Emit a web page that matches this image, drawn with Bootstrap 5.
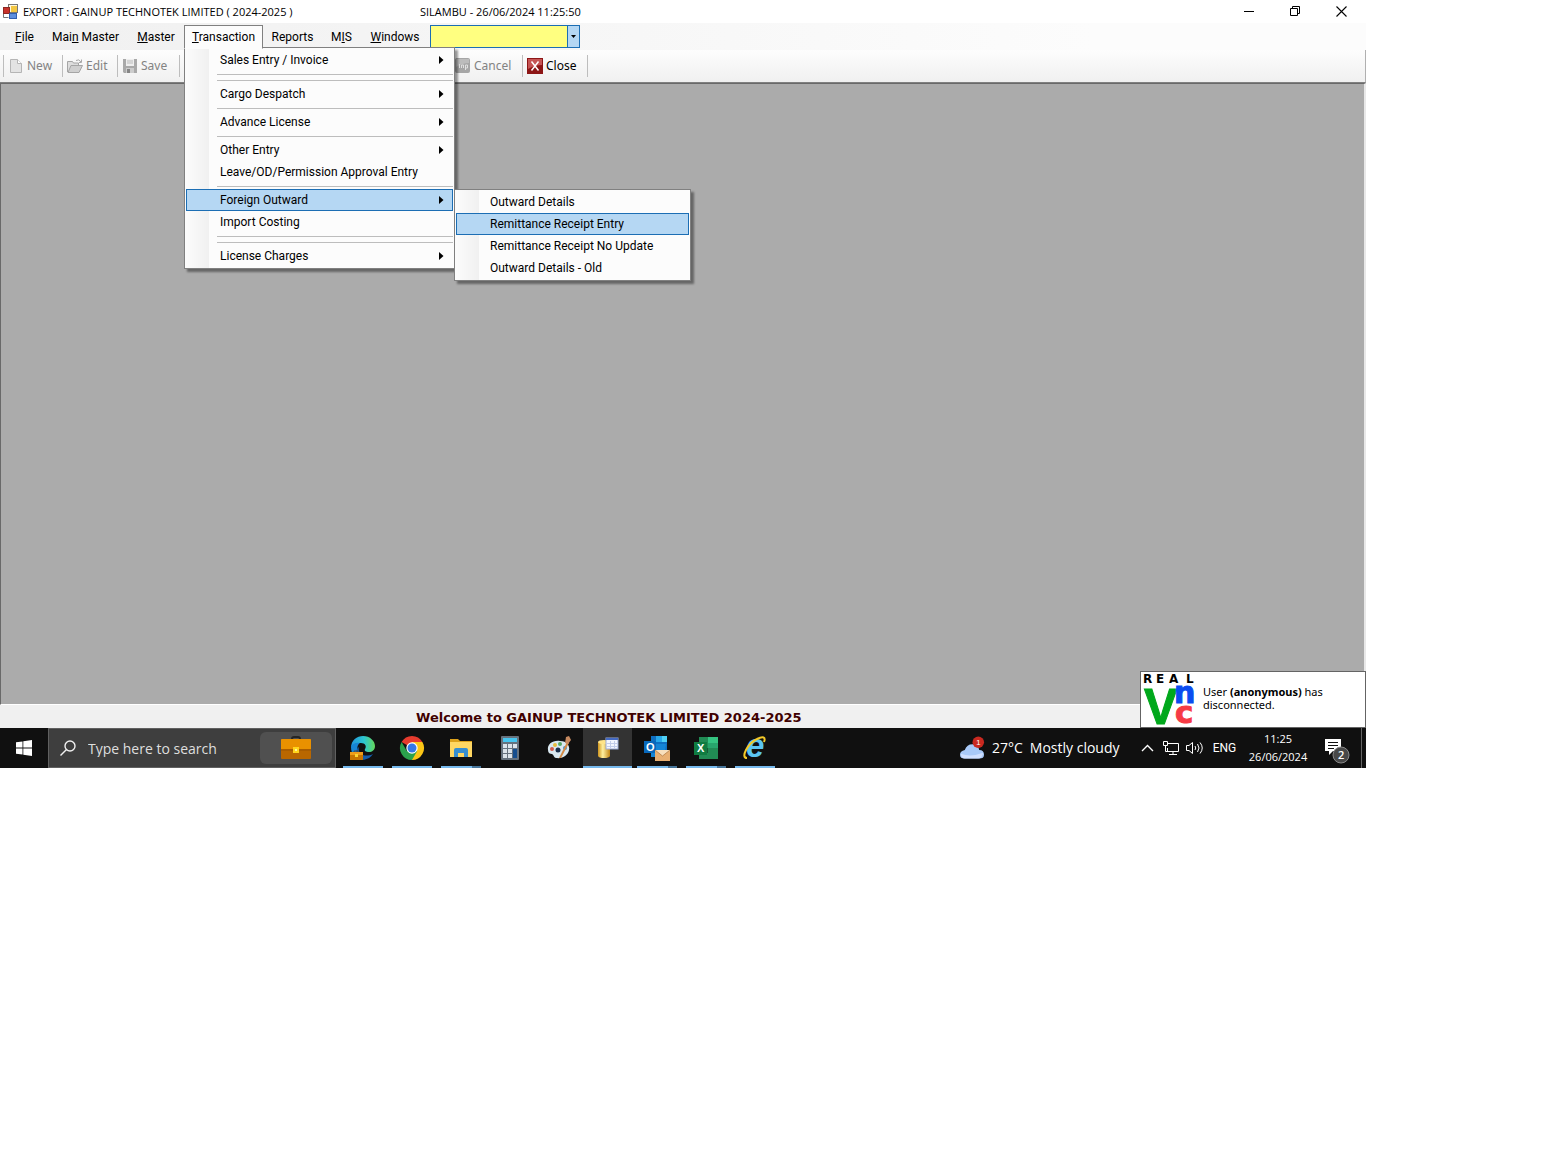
<!DOCTYPE html>
<html lang="en">
<head>
<meta charset="utf-8">
<meta name="viewport" content="width=device-width, initial-scale=1">
<title>EXPORT : GAINUP TECHNOTEK LIMITED</title>
<link rel="stylesheet" href="https://cdn.jsdelivr.net/npm/bootstrap@5.3.0/dist/css/bootstrap.min.css">
<style>
  body { font-family: Roboto, "Noto Sans", sans-serif; font-size: 12px; line-height: 16px; color: #000; background: #fff; }
  button { font: inherit; color: inherit; background: none; border: 0; padding: 0; }
  svg { display: block; flex: none; overflow: visible; }
  .desktop { max-width: 1366px; min-height: 768px; }

  /* title bar */
  .titlebar { height: 23px; padding: 0 2px 0 3px; font-family: "Open Sans", sans-serif; font-size: 11px; }
  .app-title { width: 397px; margin-left: 4px; }
  .win-btn { width: 46px; height: 21px; display: flex; align-items: center; justify-content: center; }

  /* menu bar */
  .menubar { height: 27px; padding: 2px 0 2px 6px; background: linear-gradient(90deg, #f0f0f0, #fcfcfc 80%); }
  .menubar .nav-link { height: 23px; padding: 0; text-align: center; color: #000; border: 1px solid transparent; line-height: 22px; }
  .menubar .nav-link.active { background: #fcfcfc; border-color: #808080; border-bottom-color: #fcfcfc; position: relative; z-index: 3; height: 24px; }
  .w-37 { width: 37px; } .w-85 { width: 85px; } .w-56 { width: 56px; } .w-79 { width: 79px; }
  .w-59 { width: 59px; } .w-39 { width: 39px; } .w-68 { width: 68px; }
  .combo { width: 150px; height: 23px; margin-left: 1px; }
  .combo select { display: block; appearance: none; width: 100%; height: 100%; border: 1px solid #1c6eb4; border-radius: 0; background: linear-gradient(90deg, #ffff80 calc(100% - 12px), #1c6eb4 calc(100% - 12px), #1c6eb4 calc(100% - 11px), #b5d7f3 calc(100% - 11px)); }
  .combo svg { position: absolute; right: 4px; top: 10px; pointer-events: none; }

  /* drop-down menus */
  .popmenu { position: absolute; display: flex; flex-direction: column; background: linear-gradient(90deg, #fcfcfc, #f0f0f0 24px, #fcfcfc 24px); border: 1px solid #808080; padding: 1px; box-shadow: 3px 3px 2px rgba(0,0,0,.4); }
  .popmenu-main { left: 0; top: 22px; width: 271px; z-index: 2; }
  .popmenu-sub { left: 268px; top: 0; width: 237px; z-index: 4; }
  .pop-item { display: flex; align-items: center; justify-content: space-between; height: 22px; padding: 0 8px 0 33px; border: 1px solid transparent; color: #000; text-decoration: none; white-space: nowrap; }
  .pop-item.active { background: #b5d7f3; border-color: #1c6eb4; }
  .pop-rule { height: 1px; margin: 3px 0 2px 31px; background: #bdbdbd; }

  /* tool bar */
  .toolbar { height: 33px; padding-left: 3px; font-family: "Noto Sans", sans-serif; font-size: 12px; background: linear-gradient(#fdfdfd, #f0f0f0); border-bottom: 1px solid #808080; border-right: 1px solid #b0b0b0; }
  .tool { display: flex; align-items: center; gap: 3px; height: 22px; padding-left: 4px; border-left: 1px solid #bdbdbd; }
  .tool:disabled { color: #838383; }
  .tool-a { width: 59px; } .tool-b { width: 55px; } .tool-c { width: 62px; } .tool-d { width: 65px; }
  .tool-gap { width: 276px; border-left: 1px solid #bdbdbd; height: 22px; }
  .tool-cancel { width: 67px; border-left: 0; padding-left: 0; }

  /* client area */
  .mdi { background: #ababab; border: 1px solid #696969; border-right: 2px solid #e8e8e8; border-bottom: 1px solid #fff; }
  .statusline { height: 23px; padding-left: 416px; background: #f0f0f0; color: #400000; font: bold 13px/25px "DejaVu Sans", sans-serif; }
  .toast-vnc { position: absolute; right: 0; bottom: 0; width: 226px; height: 57px; background: #fff; border: 1px solid #646464; padding-left: 3px; font-family: "Noto Sans", sans-serif; font-size: 11px; line-height: 13px; gap: 6px; z-index: 5; }
  .toast-vnc p { margin: 0 0 3px; }

  /* task bar */
  .taskbar { height: 40px; background: #101010; color: #fff; }
  .start { width: 48px; display: flex; justify-content: center; align-items: center; }
  .search { width: 288px; background: #3e3e3e; border: 1px solid #606060; padding: 0 3px 0 11px; font-family: "Open Sans", sans-serif; }
  .search input { width: 160px; background: none; border: 0; outline: 0; padding: 2px 0 0; margin-left: 12px; color: #fff; font-size: 14px; }
  .search input::placeholder { color: #dedede; opacity: 1; }
  .search-tile { width: 72px; height: 32px; border-radius: 6px; background: #505050; }
  .tasks { padding-left: 2px; }
  .task { width: 49px; position: relative; display: flex; justify-content: center; align-items: center; }
  .task.running::after { content: ""; position: absolute; left: 5px; right: 4px; bottom: 0; height: 2px; background: #76b9ed; }
  .task.multi::after { background: linear-gradient(90deg, #76b9ed 31px, #47759a 31px); }
  .task.current { background: #333; }
  .task.current::after { left: 0; right: 0; }
  .weather { width: 175px; gap: 7px; font-family: "Open Sans", sans-serif; font-size: 14px; white-space: nowrap; }
  .tray { width: 24px; display: flex; justify-content: center; align-items: center; }
  .lang { width: 35px; }
  .clock { width: 72px; font-family: "Open Sans", sans-serif; font-size: 11px; line-height: 18px; text-align: center; }
  .notice { width: 47px; display: flex; align-items: center; justify-content: center; }
  .peek { width: 5px; border-left: 1px solid #646464; }
</style>
<script src="https://cdn.jsdelivr.net/npm/bootstrap@5.3.0/dist/js/bootstrap.bundle.min.js"></script>
</head>
<body>
<div class="desktop d-flex flex-column">

  <header class="titlebar d-flex align-items-center">
    <svg width="16" height="16" viewBox="0 0 16 16"><rect x="5.500" y=".5" width="9" height="8" fill="#fff8dc" stroke="#777"/><rect x="8" y="2" width="6" height="6" fill="#f3c742"/><rect x=".5" y="3.500" width="6" height="6" fill="#c8322b" stroke="#8d2822"/><rect x="6.500" y="9.500" width="7" height="5" fill="#5d8ede" stroke="#315fae"/><path d="M.5 10v3.500h5" fill="none" stroke="#777"/></svg>
    <span class="app-title">EXPORT : GAINUP TECHNOTEK LIMITED ( 2024-2025 )</span>
    <span>SILAMBU - 26/06/2024 11:25:50</span>
    <div class="d-flex ms-auto">
      <button class="win-btn" aria-label="Minimize"><svg width="11" height="11"><path d="M0 5.500h10" stroke="#000"/></svg></button>
      <button class="win-btn" aria-label="Restore"><svg width="11" height="11" fill="none" stroke="#000"><path d="M.5 2.500h7v7h-7zM2.500 2.500v-2h7v7h-2"/></svg></button>
      <button class="win-btn" aria-label="Close window"><svg width="11" height="11"><path d="M.5.5l10 10M10.500.5l-10 10" stroke="#000" stroke-width="1.100"/></svg></button>
    </div>
  </header>

  <nav class="menubar d-flex">
    <ul class="nav flex-nowrap">
      <li class="nav-item"><a class="nav-link w-37" href="#"><u>F</u>ile</a></li>
      <li class="nav-item"><a class="nav-link w-85" href="#">Mai<u>n</u> Master</a></li>
      <li class="nav-item"><a class="nav-link w-56" href="#"><u>M</u>aster</a></li>
      <li class="nav-item position-relative"><a class="nav-link active w-79" href="#"><u>T</u>ransaction</a>
        <div class="popmenu popmenu-main">
          <a class="pop-item" href="#">Sales Entry / Invoice<svg width="5" height="8"><path d="M0 0l4.500 4L0 8z"/></svg></a>
          <div class="pop-rule"></div>
          <div class="pop-rule"></div>
          <a class="pop-item" href="#">Cargo Despatch<svg width="5" height="8"><path d="M0 0l4.500 4L0 8z"/></svg></a>
          <div class="pop-rule"></div>
          <a class="pop-item" href="#">Advance License<svg width="5" height="8"><path d="M0 0l4.500 4L0 8z"/></svg></a>
          <div class="pop-rule"></div>
          <a class="pop-item" href="#">Other Entry<svg width="5" height="8"><path d="M0 0l4.500 4L0 8z"/></svg></a>
          <a class="pop-item" href="#">Leave/OD/Permission Approval Entry</a>
          <div class="pop-rule"></div>
          <div class="position-relative">
            <a class="pop-item active" href="#">Foreign Outward<svg width="5" height="8"><path d="M0 0l4.500 4L0 8z"/></svg></a>
            <div class="popmenu popmenu-sub">
              <a class="pop-item" href="#">Outward Details</a>
              <a class="pop-item active" href="#">Remittance Receipt Entry</a>
              <a class="pop-item" href="#">Remittance Receipt No Update</a>
              <a class="pop-item" href="#">Outward Details - Old</a>
            </div>
          </div>
          <a class="pop-item" href="#">Import Costing</a>
          <div class="pop-rule"></div>
          <div class="pop-rule"></div>
          <a class="pop-item" href="#">License Charges<svg width="5" height="8"><path d="M0 0l4.500 4L0 8z"/></svg></a>
        </div>
      </li>
      <li class="nav-item"><a class="nav-link w-59" href="#">Reports</a></li>
      <li class="nav-item"><a class="nav-link w-39" href="#">M<u>I</u>S</a></li>
      <li class="nav-item"><a class="nav-link w-68" href="#"><u>W</u>indows</a></li>
    </ul>
    <div class="combo position-relative"><select aria-label="Quick open"><option></option></select><svg width="5" height="3"><path d="M0 0h5L2.500 3z"/></svg></div>
  </nav>

  <div class="toolbar d-flex align-items-center">
    <button class="tool tool-a" disabled><svg width="16" height="16" viewBox="0 0 16 16"><path d="M2.500 1.500h7l4 4v9h-11z" fill="#e3e3e3" stroke="#b5b5b5"/><path d="M9.500 1.500v4h4" fill="#fff" stroke="#b5b5b5"/></svg>New</button>
    <button class="tool tool-b" disabled><svg width="16" height="16" viewBox="0 0 16 16"><path d="M.5 14V3.500h5l1 1.500h5v3" fill="#ddd" stroke="#a5a5a5"/><path d="M1 14.500L4 7.500h11.500l-3.500 7z" fill="#cfcfcf" stroke="#a5a5a5"/><path d="M9 2.500q3-2 5 1.500m.5-2.500V4.500H12" fill="none" stroke="#aaa"/></svg>Edit</button>
    <button class="tool tool-c" disabled><svg width="16" height="16" viewBox="0 0 16 16"><path d="M1 1h14v14H2l-1-1z" fill="#a9a9a9"/><path d="M4 1h8v7H4z" fill="#eee"/><path d="M5 3h6M5 5h6" stroke="#bbb"/><path d="M4 10h8v5H4z" fill="#ccc"/><path d="M5 11h3v4H5z" fill="#858585"/></svg>Save</button>
    <div class="tool-gap"></div>
    <button class="tool tool-cancel" disabled><svg width="16" height="16" viewBox="0 0 16 16"><rect width="15" height="15" rx="2" fill="#a6a6a6"/><path d="M1 1h13v4q-6 0-13 4z" fill="#bcbcbc"/><path d="M4.500 6v4M6.500 10V7h2v3M10.500 12V7h2v3h-2" stroke="#e0e0e0" fill="none"/></svg>Cancel</button>
    <button class="tool tool-d"><svg width="16" height="16" viewBox="0 0 16 16"><rect width="16" height="16" fill="#8d1616"/><path d="M1 1h14v6Q8 7 1 11z" fill="#c55454"/><path d="M4.500 3.500l7 9M11.500 3.500l-7 9" stroke="#fff" stroke-width="1.500"/></svg>Close</button>
    <div class="tool"></div>
  </div>

  <main class="flex-grow-1 d-flex flex-column position-relative">
    <section class="mdi flex-grow-1"></section>
    <div class="statusline">Welcome to GAINUP TECHNOTEK LIMITED 2024-2025</div>
    <div class="toast-vnc d-flex align-items-center" role="status">
      <svg width="53" height="55" viewBox="0 0 53 55" font-weight="bold">
        <text x="-1 12 25 42" y="11" font-family="DejaVu Sans, sans-serif" font-size="12">REAL</text>
        <text x="0" y="52" font-family="Liberation Sans, sans-serif" font-size="50" fill="#00a81c" stroke="#00a81c">V</text>
        <text x="30" y="31" font-family="DejaVu Sans, sans-serif" font-size="30" fill="#0b4cf0" stroke="#0b4cf0">n</text>
        <text x="31" y="51" font-family="DejaVu Sans, sans-serif" font-size="31" fill="#f63b45" stroke="#f63b45">c</text>
      </svg>
      <p>User <b>(anonymous)</b> has<br>disconnected.</p>
    </div>
  </main>

  <footer class="taskbar d-flex">
    <button class="start" aria-label="Start"><svg width="16" height="16" viewBox="0 0 16 16" fill="#fff"><path d="M0 2.300l6.500-.9v6.200H0zM7.300 1.300L16 0v7.600H7.300zM0 8.400h6.500v6.200L0 13.700zM7.300 8.400H16V16l-8.700-1.300z"/></svg></button>
    <div class="search d-flex align-items-center">
      <svg width="16" height="16" fill="none" stroke="#f0f0f0" stroke-width="1.400"><circle cx="10" cy="6" r="5"/><path d="M6.500 9.500L.5 15.500"/></svg>
      <input type="text" placeholder="Type here to search" aria-label="Search">
      <div class="search-tile ms-auto d-flex align-items-center justify-content-center">
        <svg width="30" height="26" viewBox="0 0 30 26"><path d="M11 5V4q0-2 2-2h4q2 0 2 2v1" fill="none" stroke="#252525" stroke-width="2"/><rect y="4" width="30" height="20" rx="1" fill="#b96700"/><path d="M0 5q0-1 1-1h28q1 0 1 1v9H0z" fill="#e99100"/><path d="M0 14h30v2H0z" fill="#a95d00"/><rect x="12" y="12" width="6" height="6" fill="#ffd51c"/><rect x="14" y="14" width="2" height="2" fill="#fff29a"/></svg>
      </div>
    </div>
    <div class="tasks d-flex">
      <button class="task running" aria-label="Edge"><svg width="26" height="26" viewBox="0 0 26 26"><defs><linearGradient id="eg"><stop stop-color="#2094df"/><stop offset=".55" stop-color="#2dc7cf"/><stop offset="1" stop-color="#65d85a"/></linearGradient></defs><path d="M1 13C1 5 7 1 13 1c7 0 12 5 12 10 0 4-3 6-6 6-3 0-5-1-4-3 2-3 0-6-4-6-5 0-9 2-10 5z" fill="url(#eg)"/><path d="M1 12c1-3 5-5 9-4-3 2-3 5-2 9 1 4 5 6 8 7-8 3-15-3-15-12z" fill="#1785d5"/><path d="M9 12c-2 7 6 11 14 7-3 5-9 7-14 4-4-3-4-8 0-11z" fill="#155ca9"/><path d="M4 17v-1h4v1" fill="none" stroke="#444"/><rect y="17" width="13" height="8" fill="#c87500"/><path d="M0 17h13v3H0z" fill="#ef9d19"/><path d="M5 19h3v3H5z" fill="#ffd630"/></svg></button>
      <button class="task running" aria-label="Chrome"><svg width="24" height="24" viewBox="0 0 24 24"><path d="M12 12L1.600 6a12 12 0 0120.800 0z" fill="#e63b2e"/><path d="M12 12V6h10.400A12 12 0 0112 24z" fill="#fbc516"/><path d="M12 12l-5.200 3L1.600 6A12 12 0 0012 24l5.200-9z" fill="#2ba24c"/><circle cx="12" cy="12" r="5.700" fill="#fff"/><circle cx="12" cy="12" r="4.500" fill="#3478e8"/></svg></button>
      <button class="task running multi" aria-label="File Explorer"><svg width="22" height="20" viewBox="0 0 22 20"><path d="M0 1h8l2 2h12v16H0z" fill="#dda21b"/><path d="M0 4h22v15H0z" fill="#ffd763"/><path d="M4 19v-7q0-2 2-2h10q2 0 2 2v7h-4v-4H8v4z" fill="#378ed0"/></svg></button>
      <button class="task" aria-label="Calculator"><svg width="18" height="24" viewBox="0 0 18 24"><rect width="18" height="24" rx="1" fill="#66727e"/><rect x="2" y="2" width="14" height="4" fill="#47c5ef"/><path d="M2 8h4v4H2zm5 0h4v4H7zm5 0h4v4h-4zM2 13h4v4H2zm5 0h4v4H7zM2 18h4v4H2zm5 0h4v4H7z" fill="#dce4eb"/><path d="M12 13h4v9h-4z" fill="#164e8e"/></svg></button>
      <button class="task" aria-label="Paint"><svg width="24" height="24" viewBox="0 0 24 24"><path d="M1 14C0 8 6 4 13 5c7 0 10 5 9 9-1 5-6 9-13 8-2 0-2-3-4-4-2 0-4-1-4-4z" fill="#d9e8f0"/><circle cx="5" cy="13" r="2" fill="#d45b4b"/><circle cx="8" cy="9" r="2" fill="#e8bc3d"/><circle cx="13" cy="8" r="2" fill="#57a766"/><circle cx="11" cy="14" r="2.500" fill="#182d4a"/><circle cx="18" cy="12" r="2" fill="#4590cc"/><path d="M12 22L20 6l2 1-8 15z" fill="#d38a45"/><path d="M18 7l1-6 3-1 2 4-3 4z" fill="#c88b61"/></svg></button>
      <button class="task running current" aria-label="Export"><svg width="22" height="22" viewBox="0 0 22 22"><defs><linearGradient id="db"><stop stop-color="#cf951c"/><stop offset=".4" stop-color="#fff0a0"/><stop offset="1" stop-color="#c48614"/></linearGradient></defs><path d="M1 5v14q1 2 6 2t6-2V5z" fill="url(#db)"/><ellipse cx="7" cy="5" rx="6" ry="2" fill="#ffe488"/><rect x="9" y="1" width="12" height="11" fill="#f3f6ff" stroke="#9aa9d2"/><path d="M9 1h12v2H9z" fill="#456bc3"/><path d="M9 6.500h12M9 9.500h12M13.500 4v8M17.500 4v8" stroke="#c3cdea"/></svg></button>
      <button class="task running multi" aria-label="Outlook"><svg width="26" height="25" viewBox="0 0 26 25"><rect x="7" width="16" height="17" fill="#0f6fc1"/><path d="M12 0h6v6h-6z" fill="#28a8ea"/><path d="M18 0h5v6h-5z" fill="#50d0f5"/><path d="M7 8h15l-2 13H7z" fill="#1484d5"/><rect y="5" width="12" height="12" fill="#0868bb"/><text x="2" y="15" font-family="Liberation Sans, sans-serif" font-weight="bold" font-size="11" fill="#fff">O</text><rect x="11" y="14" width="15" height="11" fill="#e8af72"/><path d="M11 14l7.500 6L26 14" fill="#f8dfbd" stroke="#aa7541" stroke-width=".7"/></svg></button>
      <button class="task running multi" aria-label="Excel"><svg width="24" height="22" viewBox="0 0 24 22"><rect x="5" width="19" height="22" fill="#218b54"/><path d="M14 0h10v6H14z" fill="#35c481"/><path d="M14 6h10v5H14z" fill="#28a56c"/><path d="M5 11h9v5H5z" fill="#175938"/><rect y="5" width="13" height="13" fill="#107c41"/><text x="3" y="15" font-family="Liberation Sans, sans-serif" font-weight="bold" font-size="11" fill="#fff">X</text></svg></button>
      <button class="task running" aria-label="Internet Explorer"><svg width="24" height="24" viewBox="0 0 24 24"><text x="3" y="21" font-family="Liberation Sans, sans-serif" font-weight="bold" font-size="33" font-style="italic" fill="#5bc5f2">e</text><path d="M4 22C-3 22 5 7 14 3c6-3 9-2 7 3" fill="none" stroke="#f4c928" stroke-width="2"/></svg></button>
    </div>
    <div class="d-flex ms-auto">
      <button class="weather d-flex align-items-center"><svg width="25" height="24" viewBox="0 0 26 24"><path d="M5 23q-5 0-5-4 0-4 5-5 2-6 8-6t7 6q5 0 5 5 0 4-5 4z" fill="#a8c9f8"/><path d="M1 18q10 4 23-1-1 6-5 6H5q-4 0-4-5z" fill="#d0e0ff"/><circle cx="19" cy="6" r="6" fill="#c92920"/><text x="17" y="9" font-family="Liberation Sans, sans-serif" font-size="8" fill="#fff">1</text></svg><span>27°C</span><span>Mostly cloudy</span></button>
      <button class="tray" aria-label="Show hidden icons"><svg width="13" height="8" fill="none" stroke="#fff" stroke-width="1.400"><path d="M1 7l5.500-5.500L12 7"/></svg></button>
      <button class="tray" aria-label="Network"><svg width="17" height="14" fill="none" stroke="#fff"><path d="M5 2.500h10.500v8H4.500V7M10 10.500v3M6 13.500h8M.5.5h4v4h-4zM2.500 5v5.500H5"/></svg></button>
      <button class="tray" aria-label="Volume"><svg width="18" height="14" fill="none" stroke="#fff"><path d="M.5 4.500H3l3.500-3v11L3 9.500H.5zM9 5q1.500 2 0 4M11.500 3q3 4 0 8M14 1.500q4.500 5.500 0 11"/></svg></button>
      <button class="lang">ENG</button>
      <button class="clock">11:25<br>26/06/2024</button>
      <button class="notice" aria-label="2 notifications"><svg width="28" height="26" viewBox="0 0 28 26"><path d="M1 4h16v12H9l-4 4v-4H1z" fill="#fff"/><path d="M4 7.500h10M4 10.500h10M4 13.500h6" stroke="#101010"/><circle cx="17" cy="20" r="8" fill="#484848" stroke="#888"/><text x="14" y="24" font-family="Open Sans, sans-serif" font-size="11" fill="#fff" font-weight="600">2</text></svg></button>
      <div class="peek"></div>
    </div>
  </footer>
</div>
</body>
</html>
